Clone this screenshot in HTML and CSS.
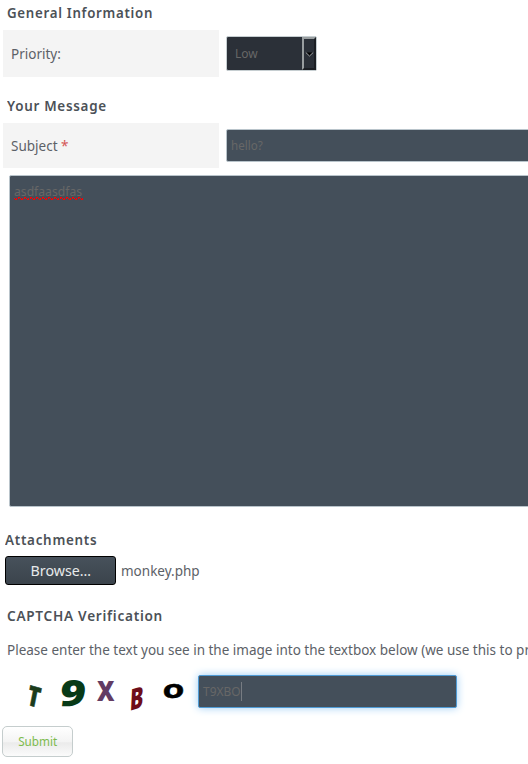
FILE: index.html
```html
<!DOCTYPE html>
<html lang="en">
<head>
<meta charset="utf-8">
<title>Submit a ticket</title>
<link rel="stylesheet" href="styles.css">
</head>
<body>
<form class="ticket">
  <h2 class="heading general">General Information</h2>
  <div class="row priority-row">
    <div class="label"><span class="narrow">Priority:</span></div>
    <div class="select"><span class="value low">Low</span><span class="arrow"><svg width="9" height="6" viewBox="0 0 9 6"><path d="M1 1.500h7L4.500 5z" fill="#000"/><path d="M.8 1.500 4.500 5 8.200 1.500" fill="none" stroke="#aeb1b3" stroke-width=".9"/></svg></span></div>
  </div>
  <h2 class="heading message">Your Message</h2>
  <div class="row subject-row">
    <div class="label"><span class="narrow">Subject <b class="required">*</b></span></div>
    <div class="input subject"><span class="value hello">hello?</span></div>
  </div>
  <div class="textarea"><span class="value body-text">asdfaasdfas</span><svg class="squiggle" width="69" height="3" viewBox="0 0 69 3"><path d="M0 1.500h69" stroke="#f00" stroke-dasharray="1 1" /><path d="M1 2.500h69" stroke="#f00" stroke-dasharray="2 4"/><path d="M4 .5h65" stroke="#f00" stroke-dasharray="2 4"/></svg></div>
  <h2 class="heading attachments">Attachments</h2>
  <div class="file"><span class="browse"><span class="browse-text">Browse…</span></span><span class="filename narrow">monkey.php</span></div>
  <h2 class="heading verify">CAPTCHA Verification</h2>
  <p class="hint narrow">Please enter the text you see in the image into the textbox below (we use this to prevent</p>
  <div class="captcha">
    <svg class="captcha-image" width="195" height="50" viewBox="0 0 195 50">
      <g font-family="Open Sans" font-weight="800">
        <text transform="matrix(.82 .22 -.2 1 26 34.500)" font-size="27" fill="#1b3b1b" stroke="#1b3b1b" stroke-width=".5" textLength="15" lengthAdjust="spacingAndGlyphs">T</text>
        <text transform="matrix(1 0 -.12 1 58.500 36)" font-size="36" fill="#083a17" textLength="26" lengthAdjust="spacingAndGlyphs">9</text>
        <text transform="translate(97 31)" font-size="29" fill="#633c63" textLength="17.500" lengthAdjust="spacingAndGlyphs">X</text>
        <text transform="matrix(1 -.3 -.05 1 129.500 41)" font-size="30" fill="#6e0d19" textLength="13.500" lengthAdjust="spacingAndGlyphs">B</text>
        <text transform="matrix(1 -.06 0 1 162.500 28.500)" font-size="25" font-weight="700" fill="#000" stroke="#000" stroke-width=".4" textLength="22" lengthAdjust="spacingAndGlyphs">o</text>
      </g>
    </svg>
    <div class="input answer"><span class="value code">T9XBO</span><i class="caret"></i></div>
  </div>
  <div class="submit"><span class="submit-text">Submit</span></div>
</form>
</body>
</html>
```
FILE: styles.css
```css
* { box-sizing: border-box; }
body { margin: 0; background: #fff; overflow: hidden; font-family: "Noto Sans", sans-serif; font-size: 15px; color: #5c6167; }
.ticket { width: 528px; height: 764px; overflow: hidden; display: flex; flex-direction: column; align-items: flex-start; }
.narrow { transform: scaleX(.9); transform-origin: left center; }
.heading { margin: 0 0 0 7px; font-size: 15px; font-weight: 600; letter-spacing: .8px; line-height: 20px; height: 20px; flex: none; white-space: nowrap; color: #4c5157; transform: scaleX(.895); transform-origin: left center; }
.general { margin-top: 2px; transform: scaleX(.885); }
.row { display: flex; flex: none; align-items: center; gap: 7px; margin-left: 3px; }
.label { width: 216px; flex: none; padding: 0 0 2px 8px; background: #f4f4f4; display: flex; align-items: center; align-self: stretch; }
.priority-row { height: 47px; margin-top: 8px; }
.select { width: 91px; height: 35px; display: flex; align-items: center; padding-left: 8px; background: #2b3038; border: 1px solid #c6ced1; border-radius: 2px; font-size: 13px; }
.value { color: #676767; white-space: nowrap; transform: translateY(-1px) scaleX(.92); transform-origin: left center; }
.arrow { width: 14px; height: 33px; margin-left: auto; display: flex; align-items: center; justify-content: center; border: 2px solid #999ea0; border-right-color: #1b1e23; border-bottom-color: #1b1e23; }
.arrow svg { flex: none; }
.message { margin-top: 18px; }
.subject-row { height: 45px; margin-top: 8px; }
.required { color: #d45656; font-weight: 400; }
.input { display: flex; flex: none; align-items: center; height: 33px; padding-left: 4px; background: #444f5a; border: 1px solid #b9c4cb; border-radius: 2px; font-size: 13px; }
.subject { width: 500px; }
.hello { transform: translateY(-1px) scaleX(.89); }
.textarea { position: relative; width: 720px; height: 332px; flex: none; margin: 7px 0 0 9px; padding: 7px 4px; background: #444f5a; border: 1px solid #b9c4cb; border-radius: 2px; font-size: 13px; line-height: 18px; }
.body-text { display: inline-block; transform: translateY(-1px) scaleX(.935); }
.squiggle { position: absolute; left: 4px; top: 21px; }
.attachments { margin: 22px 0 0 5px; }
.file { display: flex; flex: none; align-items: center; gap: 5px; margin: 6px 0 0 5px; height: 30px; }
.browse { width: 111px; height: 29px; border: 1px solid #000; border-radius: 3px; background: linear-gradient(#47515b, #3b444c); color: #e7e9ea; display: flex; align-items: center; justify-content: center; }
.browse-text { transform: scaleX(.95); }
.verify { margin-top: 20px; transform: scaleX(.907); }
.hint { margin: 14px 0 0 7px; line-height: 20px; height: 20px; flex: none; white-space: nowrap; }
.captcha { display: flex; flex: none; align-items: flex-start; height: 50px; margin-top: 11px; }
.captcha-image { flex: none; margin-right: 3px; }
.answer { width: 259px; margin-top: 5px; height: 33px; border-color: #4f9bd5; box-shadow: 0 0 8px #9dcdf5; }
.caret { width: 1px; height: 19px; margin-left: -3px; background: #777c82; }
.submit { width: 71px; height: 31px; flex: none; margin: 6px 0 0 2px; display: flex; align-items: center; justify-content: center; border: 1px solid #c5cdcd; border-radius: 5px; background: linear-gradient(#fff 0%, #f4f4f4 50%, #ebebeb 55%, #fbfbfb 100%); color: #7dbb4d; font-size: 13px; }
.submit-text { transform: translateY(-1px) scaleX(.9); }
```
